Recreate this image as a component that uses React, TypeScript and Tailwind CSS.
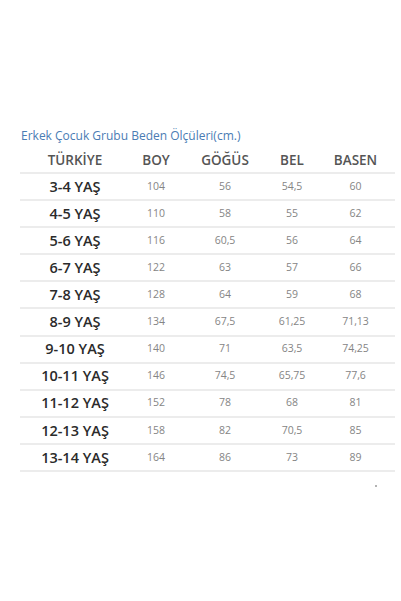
import React from "react";

const rows = [
  ["3-4 YAŞ", "104", "56", "54,5", "60"],
  ["4-5 YAŞ", "110", "58", "55", "62"],
  ["5-6 YAŞ", "116", "60,5", "56", "64"],
  ["6-7 YAŞ", "122", "63", "57", "66"],
  ["7-8 YAŞ", "128", "64", "59", "68"],
  ["8-9 YAŞ", "134", "67,5", "61,25", "71,13"],
  ["9-10 YAŞ", "140", "71", "63,5", "74,25"],
  ["10-11 YAŞ", "146", "74,5", "65,75", "77,6"],
  ["11-12 YAŞ", "152", "78", "68", "81"],
  ["12-13 YAŞ", "158", "82", "70,5", "85"],
  ["13-14 YAŞ", "164", "86", "73", "89"],
];

const headers = ["TÜRKİYE", "BOY", "GÖĞÜS", "BEL", "BASEN"];

export default function App() {
  return (
    <div className="min-h-[601px] w-[401px] bg-white pt-[128px] font-['Open_Sans',sans-serif]">
      <div className="pl-[21px] text-[12px] leading-[16px] text-[#4a7cb4]">
        Erkek Çocuk Grubu Beden Ölçüleri(cm.)
      </div>

      <div className="ml-[20px] w-[375px]">
        <div className="grid h-[30px] grid-cols-[110px_52px_86px_48px_79px] items-center border-b-2 border-[#ececec] pt-[4px] text-[13.5px] font-semibold text-[#555555]">
          {headers.map((h) => (
            <div key={h} className="text-center">
              {h}
            </div>
          ))}
        </div>

        {rows.map((r) => (
          <div
            key={r[0]}
            className="grid h-[27.1px] grid-cols-[110px_52px_86px_48px_79px] items-center border-b-2 border-[#ececec]"
          >
            <div className="text-center text-[14.5px] font-semibold text-[#2b2b2b]">{r[0]}</div>
            {r.slice(1).map((v, i) => (
              <div key={i} className="text-center text-[10.5px] text-[#858585]">
                {v}
              </div>
            ))}
          </div>
        ))}
      </div>

      <div className="ml-[375px] mt-[13px] h-[2px] w-[2px] rounded-full bg-[#9a9a9a]" />
    </div>
  );
}
